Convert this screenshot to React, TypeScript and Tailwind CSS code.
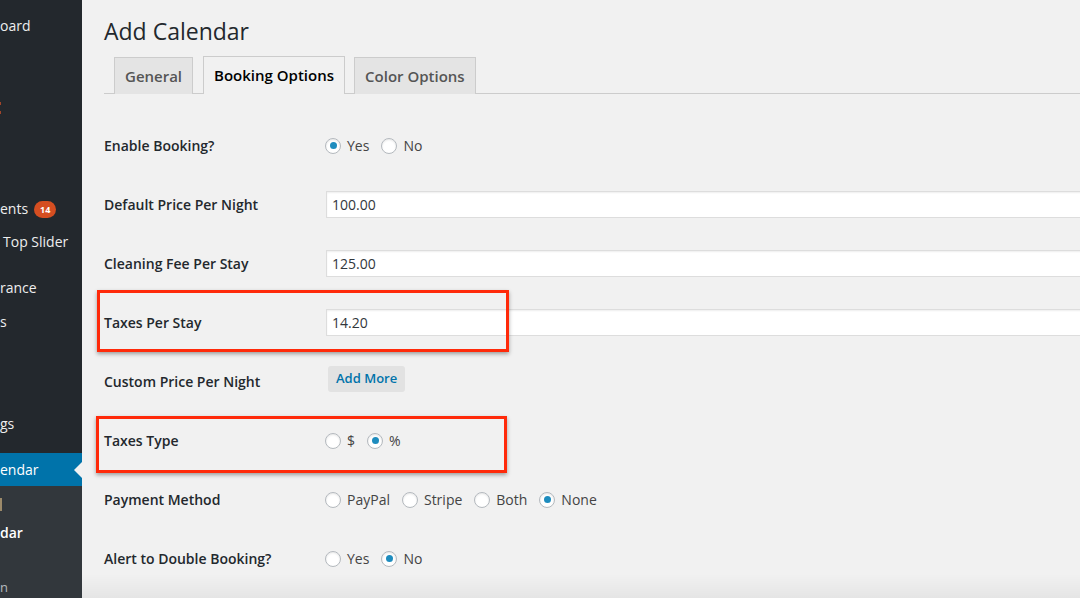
import React from "react";

function Radio({ checked }: { checked?: boolean }) {
  return (
    <span className="w-[16px] h-[16px] rounded-full border border-[#b4b9be] bg-white shadow-[inset_0_1px_2px_rgba(0,0,0,0.1)] flex items-center justify-center shrink-0">
      {checked && <span className="w-[7px] h-[7px] rounded-full bg-[#1e8cbe]" />}
    </span>
  );
}

function RadioGroup({ options, checked }: { options: string[]; checked: number }) {
  return (
    <div className="flex items-center gap-[12px] -ml-[1px]">
      {options.map((o, i) => (
        <label key={o} className="flex items-center gap-[6px] text-[14px] text-[#444] leading-[20px]">
          <Radio checked={i === checked} />
          <span>{o}</span>
        </label>
      ))}
    </div>
  );
}

function Row({ label, children }: { label: string; children: React.ReactNode }) {
  return (
    <div className="h-[59px] flex items-center">
      <div className="w-[222px] shrink-0 text-[14px] font-semibold text-[#23282d] leading-[20px]">{label}</div>
      <div className="flex-1 flex items-center">{children}</div>
    </div>
  );
}

function TextInput({ value }: { value: string }) {
  return (
    <div className="w-[800px] h-[27px] bg-white border border-[#ddd] shadow-[inset_0_1px_2px_rgba(0,0,0,0.07)] flex items-center pl-[5px] text-[14px] text-[#32373c] shrink-0">
      {value}
    </div>
  );
}

export default function App() {
  return (
    <div className="relative w-[1080px] h-[598px] flex overflow-hidden font-['Open_Sans',sans-serif] bg-[#f1f1f1]">
      {/* Sidebar */}
      <div className="w-[82px] shrink-0 bg-[#23282d] flex flex-col text-[14px] text-[#eee] leading-[20px]">
        <div className="mt-[16px] h-[20px]">oard</div>
        <div className="mt-[66px] h-[3px] w-[1px] bg-[#a0452a]" />
        <div className="mt-[6px] h-[3px] w-[1px] bg-[#a0452a]" />
        <div className="mt-[85px] h-[20px] flex items-center">
          <span>ents</span>
          <span className="ml-[6px] h-[17px] px-[6px] rounded-full bg-[#d54e21] text-white text-[9px] font-bold flex items-center leading-none">14</span>
        </div>
        <div className="mt-[13px] h-[20px] pl-[3px]">Top Slider</div>
        <div className="mt-[26px] h-[20px]">rance</div>
        <div className="mt-[14px] h-[20px]">s</div>
        <div className="mt-[82px] h-[20px]">gs</div>
        <div className="mt-[19px] h-[33px] bg-[#0073aa] text-white flex items-center justify-between">
          <span>endar</span>
          <span className="w-0 h-0 border-y-[8px] border-y-transparent border-r-[8px] border-r-[#f1f1f1]" />
        </div>
        <div className="flex-1 bg-[#32373c] flex flex-col text-[13px]">
          <div className="mt-[12px] h-[13px] w-[2px] bg-[#9c8a6a]" />
          <div className="mt-[12px] h-[20px] text-white font-semibold text-[14px]">dar</div>
          <div className="mt-[34px] h-[20px] text-[#b4b9be]">n</div>
        </div>
      </div>

      {/* Main */}
      <div className="flex-1 pl-[22px] flex flex-col">
        <h1 className="pt-[17px] text-[23px] leading-[29px] font-normal text-[#23282d]">Add Calendar</h1>
        <div className="mt-[10px] flex items-end border-b border-[#ccc] pl-[10px] h-[38px]">
          <div className="h-[37px] px-[10px] flex items-center bg-[#e4e4e4] border border-[#ccc] border-b-0 text-[15px] font-semibold text-[#555] -mb-px">General</div>
          <div className="ml-[10px] h-[38px] px-[10px] flex items-center bg-[#f1f1f1] border border-[#ccc] border-b-0 text-[15px] font-semibold text-[#000] -mb-px pb-[1px]">Booking Options</div>
          <div className="ml-[9px] h-[37px] px-[10px] flex items-center bg-[#e4e4e4] border border-[#ccc] border-b-0 text-[15px] font-semibold text-[#555] -mb-px">Color Options</div>
        </div>
        <div className="mt-[22px] flex flex-col">
          <Row label="Enable Booking?">
            <RadioGroup options={["Yes", "No"]} checked={0} />
          </Row>
          <Row label="Default Price Per Night">
            <TextInput value="100.00" />
          </Row>
          <Row label="Cleaning Fee Per Stay">
            <TextInput value="125.00" />
          </Row>
          <Row label="Taxes Per Stay">
            <TextInput value="14.20" />
          </Row>
          <Row label="Custom Price Per Night">
            <button className="ml-[2px] mb-[5px] h-[26px] px-[8px] rounded-[3px] bg-[#e2e2e2] text-[#0073aa] text-[13px] font-semibold">Add More</button>
          </Row>
          <Row label="Taxes Type">
            <RadioGroup options={["$", "%"]} checked={1} />
          </Row>
          <Row label="Payment Method">
            <RadioGroup options={["PayPal", "Stripe", "Both", "None"]} checked={3} />
          </Row>
          <Row label="Alert to Double Booking?">
            <RadioGroup options={["Yes", "No"]} checked={1} />
          </Row>
        </div>
      </div>

      {/* Annotation boxes */}
      <div className="absolute left-[97px] top-[290px] w-[412px] h-[62px] border-[3px] border-[#ff2a0a] shadow-[0_2px_4px_rgba(0,0,0,0.35)]" />
      <div className="absolute left-[96px] top-[416px] w-[411px] h-[57px] border-[3px] border-[#ff2a0a] shadow-[0_2px_4px_rgba(0,0,0,0.35)]" />

      {/* bottom shade */}
      <div className="absolute left-[82px] right-0 bottom-0 h-[24px] bg-gradient-to-b from-transparent to-[rgba(0,0,0,0.05)]" />
    </div>
  );
}
